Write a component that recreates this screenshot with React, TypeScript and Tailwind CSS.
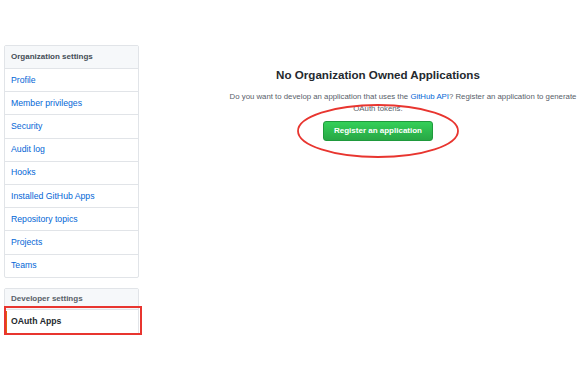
const ORG_LINKS = [
  'Profile',
  'Member privileges',
  'Security',
  'Audit log',
  'Hooks',
  'Installed GitHub Apps',
  'Repository topics',
  'Projects',
  'Teams',
]

export default function App() {
  return (
    <div
      className="relative w-[586px] h-[386px] overflow-hidden bg-white text-[#24292e]"
      style={{ fontFamily: '"Liberation Sans", Arial, sans-serif' }}
    >
      <div className="flex pt-[45px] pl-[4px]">
        {/* Sidebar */}
        <div className="w-[135px] shrink-0">
          <div className="border border-[#e1e4e8] rounded-[2px]">
            <div className="h-[22px] flex items-center px-[6px] bg-[#f6f8fa] text-[8px] font-bold text-[#444d56]">
              Organization settings
            </div>
            {ORG_LINKS.map((label) => (
              <div
                key={label}
                className="h-[23.2px] flex items-center px-[6px] border-t border-[#e1e4e8] text-[8.7px] text-[#0366d6]"
              >
                {label}
              </div>
            ))}
          </div>

          <div className="mt-[10px] border border-[#e1e4e8] rounded-[2px]">
            <div className="h-[20px] flex items-center px-[6px] bg-[#f6f8fa] text-[8px] font-bold text-[#586069]">
              Developer settings
            </div>
            <div className="relative h-[25px] flex items-center px-[6px] border-t border-[#e1e4e8] text-[8.7px] font-bold text-[#24292e]">
              <span className="absolute left-0 top-[1px] bottom-[1px] w-[2px] bg-[#e36209]" />
              OAuth Apps
            </div>
          </div>
        </div>

        {/* Main blankslate */}
        <div className="flex-1 pl-[31px] pt-[23px] flex flex-col items-center">
          <h2 className="text-[11.6px] font-bold text-[#24292e] leading-[14px]">
            No Organization Owned Applications
          </h2>
          <p className="mt-[9px] text-[7.8px] leading-[12px] text-[#586069] whitespace-nowrap ml-[50px]">
            Do you want to develop an application that uses the{' '}
            <span className="text-[#0366d6]">GitHub API</span>? Register an application to generate
          </p>
          <p className="text-[7.8px] leading-[12px] text-[#586069]">OAuth tokens.</p>
          <button className="mt-[6px] w-[110px] h-[20px] rounded-[3px] border border-[#1f9a3c] bg-gradient-to-b from-[#34d058] to-[#28a745] text-white text-[8px] font-bold">
            Register an application
          </button>
        </div>
      </div>

      {/* Red annotations */}
      <div className="absolute left-[4px] top-[306px] w-[138px] h-[29px] border-2 border-[#e8352f]" />
      <svg className="absolute left-0 top-0" width="586" height="386">
        <ellipse cx="378" cy="131" rx="80" ry="26" fill="none" stroke="#e8352f" strokeWidth="1.8" />
      </svg>
    </div>
  )
}
